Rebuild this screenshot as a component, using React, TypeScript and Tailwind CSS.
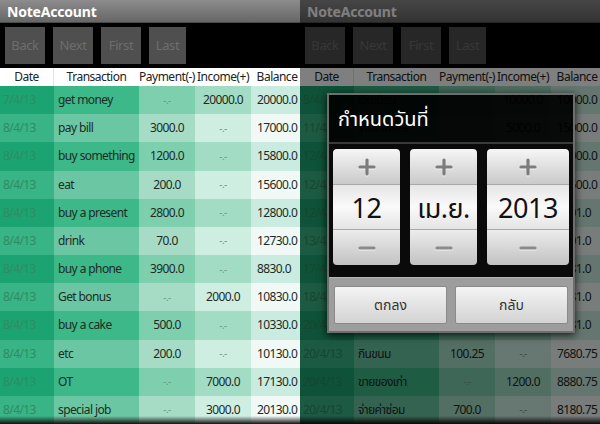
import React from 'react';

type Row = [string, string, string, string, string];

const leftRows: Row[] = [
  ['7/4/13', 'get money', '-.-', '20000.0', '20000.0'],
  ['8/4/13', 'pay bill', '3000.0', '-.-', '17000.0'],
  ['8/4/13', 'buy something', '1200.0', '-.-', '15800.0'],
  ['8/4/13', 'eat', '200.0', '-.-', '15600.0'],
  ['8/4/13', 'buy a present', '2800.0', '-.-', '12800.0'],
  ['8/4/13', 'drink', '70.0', '-.-', '12730.0'],
  ['8/4/13', 'buy a phone', '3900.0', '-.-', '8830.0'],
  ['8/4/13', 'Get bonus', '-.-', '2000.0', '10830.0'],
  ['8/4/13', 'buy a cake', '500.0', '-.-', '10330.0'],
  ['8/4/13', 'etc', '200.0', '-.-', '10130.0'],
  ['8/4/13', 'OT', '-.-', '7000.0', '17130.0'],
  ['8/4/13', 'special job', '-.-', '3000.0', '20130.0'],
];

const rightRows: Row[] = [
  ['8/4/13', 'เงินเดือน', '-.-', '10000.0', '10000.0'],
  ['11/4/13', 'รายได้พิเศษ', '-.-', '5000.0', '15000.0'],
  ['12/4/13', 'ค่าเช่าห้อง', '3000.0', '-.-', '12000.0'],
  ['12/4/13', 'ค่าโทรศัพท์', '500.0', '-.-', '11500.0'],
  ['12/4/13', 'ซื้อของ', '2899.0', '-.-', '8601.0'],
  ['13/4/13', 'ค่าน้ำมัน', '100.0', '-.-', '8501.0'],
  ['17/4/13', 'ค่าอาหาร', '220.0', '-.-', '8281.0'],
  ['18/4/13', 'ดูหนัง', '200.0', '-.-', '8081.0'],
  ['20/4/13', 'ค่าเดินทาง', '300.0', '-.-', '7781.0'],
  ['20/4/13', 'กินขนม', '100.25', '-.-', '7680.75'],
  ['20/4/13', 'ขายของเก่า', '-.-', '1200.0', '8880.75'],
  ['20/4/13', 'จ่ายค่าซ่อม', '700.0', '-.-', '8180.75'],
];

const font = "font-['Noto_Sans','Noto_Sans_Thai','Open_Sans',sans-serif]";
const cols = 'grid grid-cols-[54px_85px_56px_56px_56px]';

// column shades, dark to light, alternating rows
const odd = ['bg-[#1ba472]', 'bg-[#3cb889]', 'bg-[#7ecfae]', 'bg-[#a3dcc4]', 'bg-[#caece0]'];
const even = ['bg-[#38b487]', 'bg-[#6bc7a3]', 'bg-[#a6dcc6]', 'bg-[#cfeee2]', 'bg-[#f0f9f5]'];

function Cell({ value, i }: { value: string; i: number }) {
  if (value === '-.-') {
    return <span className="text-[10px] text-[#6f9a88]">-.-</span>;
  }
  if (i === 0) return <span className="text-[#2f8d5f]">{value}</span>;
  return <span className="text-[#1e2a25]">{value}</span>;
}

function Panel({ rows, dim }: { rows: Row[]; dim?: boolean }) {
  return (
    <div className={`relative w-[300px] h-[424px] overflow-hidden flex flex-col bg-black ${font}`}>
      {/* title bar */}
      <div className="h-[23px] shrink-0 bg-gradient-to-b from-[#8c8c8c] to-[#676767] border-b border-[#4a4a4a] flex items-center px-[7px]">
        <span className="text-white font-bold text-[14px] tracking-[-0.2px]">NoteAccount</span>
      </div>

      {/* nav buttons */}
      <div className="h-[45px] shrink-0 bg-black flex items-center gap-[8px] px-[5px]">
        {['Back', 'Next', 'First', 'Last'].map((b, i) => (
          <div
            key={b}
            className={`h-[37px] ${i === 3 ? 'w-[37px]' : 'w-[40px]'} bg-[#4f4f4f] flex items-center justify-center text-[13px] text-[#6d6d6d] tracking-[-0.4px]`}
          >
            {b}
          </div>
        ))}
      </div>

      {/* header */}
      <div className={`${cols} h-[18px] shrink-0 bg-white text-[12px] text-[#222] tracking-[-0.5px] leading-[18px] text-center`}>
        <div className="border-r border-[#e4e4e4]">Date</div>
        <div>Transaction</div>
        <div className="whitespace-nowrap">Payment(-)</div>
        <div className="whitespace-nowrap">Income(+)</div>
        <div className="whitespace-nowrap pr-[4px]">Balance</div>
      </div>

      {/* rows */}
      <div className="flex-1 flex flex-col">
        {rows.map((r, ri) => {
          const shades = ri % 2 === 0 ? odd : even;
          return (
            <div key={ri} className={`${cols} flex-1 text-[12px] tracking-[-0.6px]`}>
              {r.map((v, ci) => (
                <div
                  key={ci}
                  className={`${shades[ci]} flex items-center whitespace-nowrap ${
                    ci === 0 ? 'pl-[3px]' : ci === 1 ? 'pl-[4px]' : 'justify-center'
                  } ${ci === 4 ? 'pl-[6px] justify-start' : ''}`}
                >
                  <Cell value={v} i={ci} />
                </div>
              ))}
            </div>
          );
        })}
      </div>

      <div className="absolute left-0 right-0 bottom-0 h-[8px] bg-gradient-to-b from-transparent to-[#111]" />

      {dim && (
        <>
          <div className="absolute inset-0 bg-black/50" />
          <DateDialog />
        </>
      )}
    </div>
  );
}

function Plus() {
  return (
    <svg width="20" height="20" viewBox="0 0 20 20">
      <path d="M10 3v14M3 10h14" stroke="#f4f4f4" strokeWidth="3.2" strokeLinecap="round" transform="translate(0 1)" />
      <path d="M10 3v14M3 10h14" stroke="#7c7c7c" strokeWidth="3.2" strokeLinecap="round" />
    </svg>
  );
}

function Minus() {
  return (
    <svg width="20" height="8" viewBox="0 0 20 8">
      <path d="M3 4h14" stroke="#f2f2f2" strokeWidth="3.2" strokeLinecap="round" transform="translate(0 1)" />
      <path d="M3 4h14" stroke="#8a8a8a" strokeWidth="3.2" strokeLinecap="round" />
    </svg>
  );
}

function Picker({ value, width }: { value: string; width: string }) {
  return (
    <div className={`${width} h-[116px] rounded-[4px] overflow-hidden flex flex-col`}>
      <div className="h-[36px] bg-gradient-to-b from-[#f6f6f6] to-[#cacaca] flex items-center justify-center border-b border-[#a9a9a9]">
        <Plus />
      </div>
      <div className="h-[44px] bg-gradient-to-b from-[#e6e6e6] via-[#fafafa] to-[#e4e4e4] flex items-center justify-center text-[27px] text-[#111] tracking-[-0.5px] leading-none">
        {value}
      </div>
      <div className="h-[36px] bg-gradient-to-b from-[#ececec] to-[#c2c2c2] flex items-center justify-center border-t border-[#a9a9a9]">
        <Minus />
      </div>
    </div>
  );
}

function DateDialog() {
  return (
    <div className="absolute left-[27px] top-[93px] w-[248px] h-[240px] border-2 border-[#6e6e6e] flex flex-col shadow-[0_2px_8px_rgba(0,0,0,0.8)]">
      <div className="h-[47px] shrink-0 bg-black/[0.93] flex items-center px-[9px] text-white text-[20px]">กำหนดวันที่</div>
      <div className="h-[2px] shrink-0 bg-[#3a3a3a]" />
      <div className="flex-1 bg-[#0a0a0a] flex gap-[10px] px-[4px] pt-[5px]">
        <Picker value="12" width="w-[67px]" />
        <Picker value="เม.ย." width="w-[67px]" />
        <Picker value="2013" width="w-[82px]" />
      </div>
      <div className="h-[54px] shrink-0 bg-[#9d9d9d] border-t border-[#b5b5b5] flex items-center gap-[8px] px-[5px]">
        {['ตกลง', 'กลับ'].map((t) => (
          <div
            key={t}
            className="flex-1 h-[38px] rounded-[2px] bg-gradient-to-b from-[#f4f4f4] to-[#d3d3d3] border border-[#8a8a8a] flex items-center justify-center text-[14px] text-[#333]"
          >
            {t}
          </div>
        ))}
      </div>
    </div>
  );
}

export default function App() {
  return (
    <div className="w-[600px] h-[424px] flex overflow-hidden bg-black">
      <Panel rows={leftRows} />
      <Panel rows={rightRows} dim />
    </div>
  );
}
